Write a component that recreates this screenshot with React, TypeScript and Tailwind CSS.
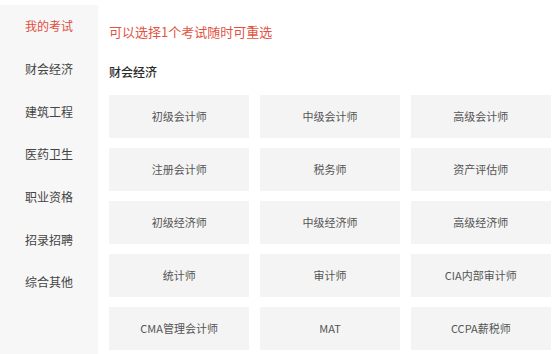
import React, { useState } from "react";

const MENU = ["我的考试", "财会经济", "建筑工程", "医药卫生", "职业资格", "招录招聘", "综合其他"];

const EXAMS = [
  "初级会计师",
  "中级会计师",
  "高级会计师",
  "注册会计师",
  "税务师",
  "资产评估师",
  "初级经济师",
  "中级经济师",
  "高级经济师",
  "统计师",
  "审计师",
  "CIA内部审计师",
  "CMA管理会计师",
  "MAT",
  "CCPA薪税师",
];

export default function App() {
  const [active, setActive] = useState(0);

  return (
    <div
      className="flex w-[556px] h-[354px] overflow-hidden bg-white"
      style={{ fontFamily: '"Noto Sans CJK SC", "Noto Sans", sans-serif' }}
    >
      {/* Left category menu */}
      <div className="w-[98px] shrink-0 mt-[5px] bg-[#f7f7f7]">
        {MENU.map((item, i) => (
          <button
            key={item}
            type="button"
            onClick={() => setActive(i)}
            className={`w-full h-[42.7px] flex items-center justify-center text-[12px] ${
              i === active ? "text-[#e24c3d]" : "text-[#444]"
            }`}
          >
            {item}
          </button>
        ))}
      </div>

      {/* Exam list */}
      <div className="flex-1 pl-[11px] pr-[5px]">
        <div className="mt-[22px] h-[20px] leading-[20px] text-[13px] text-[#e2533f]">
          可以选择1个考试随时可重选
        </div>
        <div className="mt-[19.5px] h-[20px] leading-[20px] text-[12px] font-medium text-[#2a2a2a]">
          财会经济
        </div>
        <div className="mt-[13.5px] grid grid-cols-3 gap-x-[10.5px] gap-y-[10.5px]">
          {EXAMS.map((name) => (
            <div
              key={name}
              className="h-[42.5px] flex items-center justify-center bg-[#f4f4f4] text-[11px] text-[#555]"
            >
              {name}
            </div>
          ))}
        </div>
      </div>
    </div>
  );
}
